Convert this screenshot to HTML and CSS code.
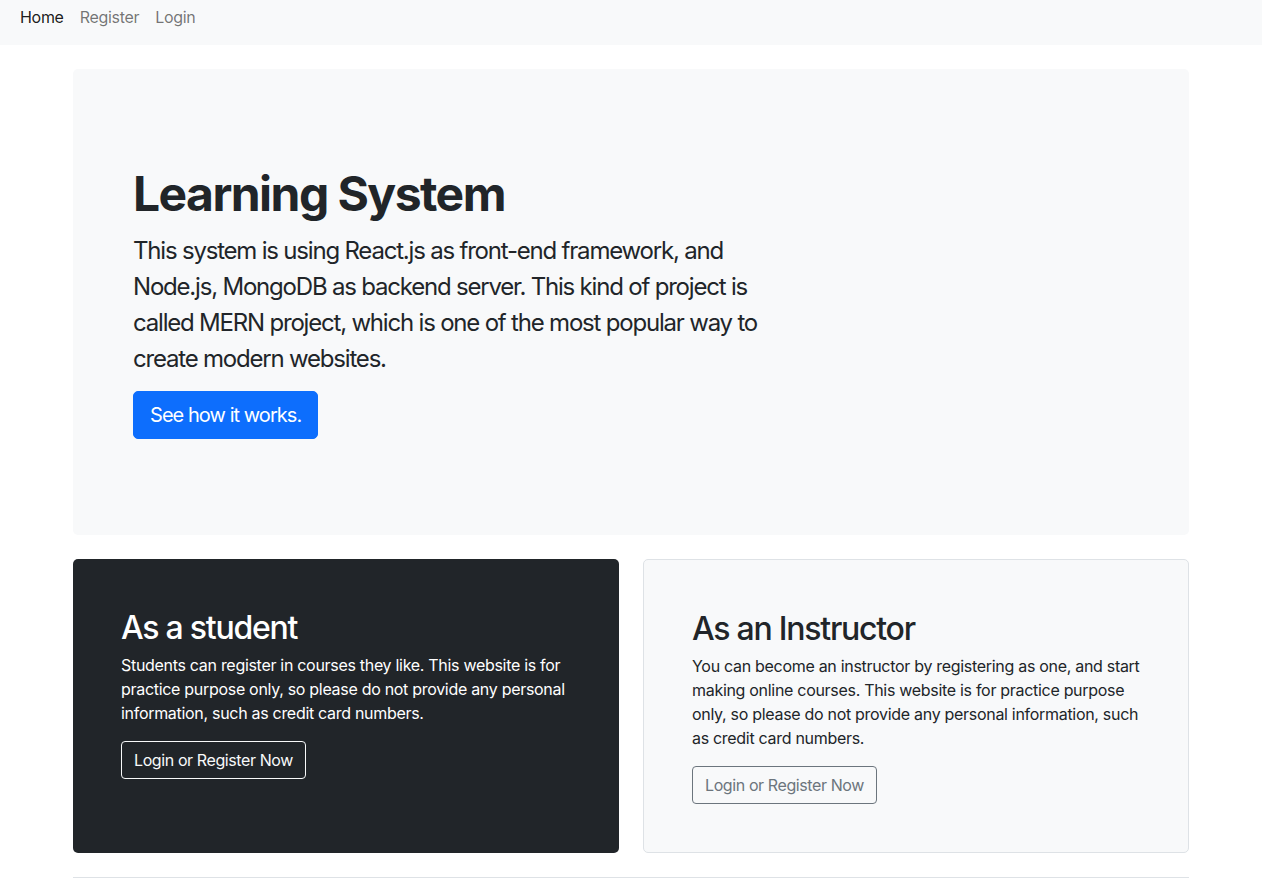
FILE: index.html
```html
<!DOCTYPE html>
<html lang="en">
<head>
<meta charset="utf-8">
<title>Learning System</title>
<link rel="stylesheet" href="styles.css">
</head>
<body>
<nav class="navbar">
  <a class="nav-link active" href="#">Home</a>
  <a class="nav-link" href="#">Register</a>
  <a class="nav-link" href="#">Login</a>
</nav>
<main class="container">
  <section class="hero">
    <div class="hero-inner">
      <h1 class="hero-title">Learning System</h1>
      <p class="hero-text">This system is using React.js as front-end framework, and Node.js, MongoDB as backend server. This kind of project is called MERN project, which is one of the most popular way to create modern websites.</p>
      <button class="btn btn-primary" type="button">See how it works.</button>
    </div>
  </section>
  <div class="cards">
    <div class="card card-dark">
      <h2 class="card-title">As a student</h2>
      <p class="card-text">Students can register in courses they like. This website is for practice purpose only, so please do not provide any personal information, such as credit card numbers.</p>
      <button class="btn btn-outline-light" type="button">Login or Register Now</button>
    </div>
    <div class="card card-light">
      <h2 class="card-title">As an Instructor</h2>
      <p class="card-text">You can become an instructor by registering as one, and start making online courses. This website is for practice purpose only, so please do not provide any personal information, such as credit card numbers.</p>
      <button class="btn btn-outline-secondary" type="button">Login or Register Now</button>
    </div>
  </div>
  <footer class="footer">© 2022 Learning System</footer>
</main>
</body>
</html>
```
FILE: styles.css
```css
* { box-sizing: border-box; }
body {
  margin: 0;
  font-family: Inter, "Noto Sans", "Liberation Sans", sans-serif;
  font-size: 16px;
  line-height: 1.5;
  color: #212529;
  background: #fff;
}
.navbar {
  display: flex;
  height: 45px;
  padding: 5px 12px 0;
  background: #f8f9fa;
}
.nav-link {
  padding: 0 8px;
  height: 24px;
  line-height: 24px;
  color: rgba(0,0,0,.55);
  text-decoration: none;
  letter-spacing: -0.3px;
}
.nav-link.active { color: rgba(0,0,0,.9); }
.container {
  width: 1140px;
  margin: 0 auto;
  padding: 24px 12px 0;
}
.hero {
  background: #f8f9fa;
  border-radius: 5px;
  padding: 48px;
  margin-bottom: 24px;
}
.hero-inner { padding: 48px 12px; }
.hero-title {
  margin: 0 0 8px;
  font-size: 48px;
  font-weight: 700;
  line-height: 1.2;
  letter-spacing: -1.55px;
}
.hero-text {
  width: 665px;
  margin: 0 0 16px;
  padding-top: 2px;
  font-size: 24px;
  line-height: 36px;
  font-weight: 400;
  letter-spacing: -1.2px;
}
.hero-text + .btn { margin-top: -2px; }
.btn {
  font-family: inherit;
  display: inline-block;
  border: 1px solid transparent;
  background: transparent;
  font-size: 16px;
  line-height: 24px;
  padding: 6px 12px;
  border-radius: 4px;
  letter-spacing: -0.4px;
  cursor: pointer;
}
.btn-primary {
  background: #0d6efd;
  border-color: #0d6efd;
  color: #fff;
  font-size: 20px;
  line-height: 30px;
  padding: 8px 16px;
  border-radius: 5px;
  letter-spacing: -0.95px;
}
.btn-outline-light { color: #f8f9fa; border-color: #f8f9fa; }
.btn-outline-secondary { color: #6c757d; border-color: #6c757d; }
.cards {
  display: grid;
  grid-template-columns: 1fr 1fr;
  gap: 24px;
  margin-bottom: 24px;
}
.card {
  padding: 48px;
  border-radius: 5px;
}
.card-dark { background: #212529; color: #fff; }
.card-light { background: #f8f9fa; border: 1px solid #dee2e6; }
.card-title {
  margin: 0 0 6px;
  padding-top: 2px;
  font-size: 32px;
  font-weight: 500;
  line-height: 1.2;
  letter-spacing: -1.25px;
}
.card-text {
  margin: 0 0 16px;
  letter-spacing: -0.3px;
}
.footer {
  border-top: 1px solid #dee2e6;
  padding-top: 16px;
  color: #6c757d;
}
```
